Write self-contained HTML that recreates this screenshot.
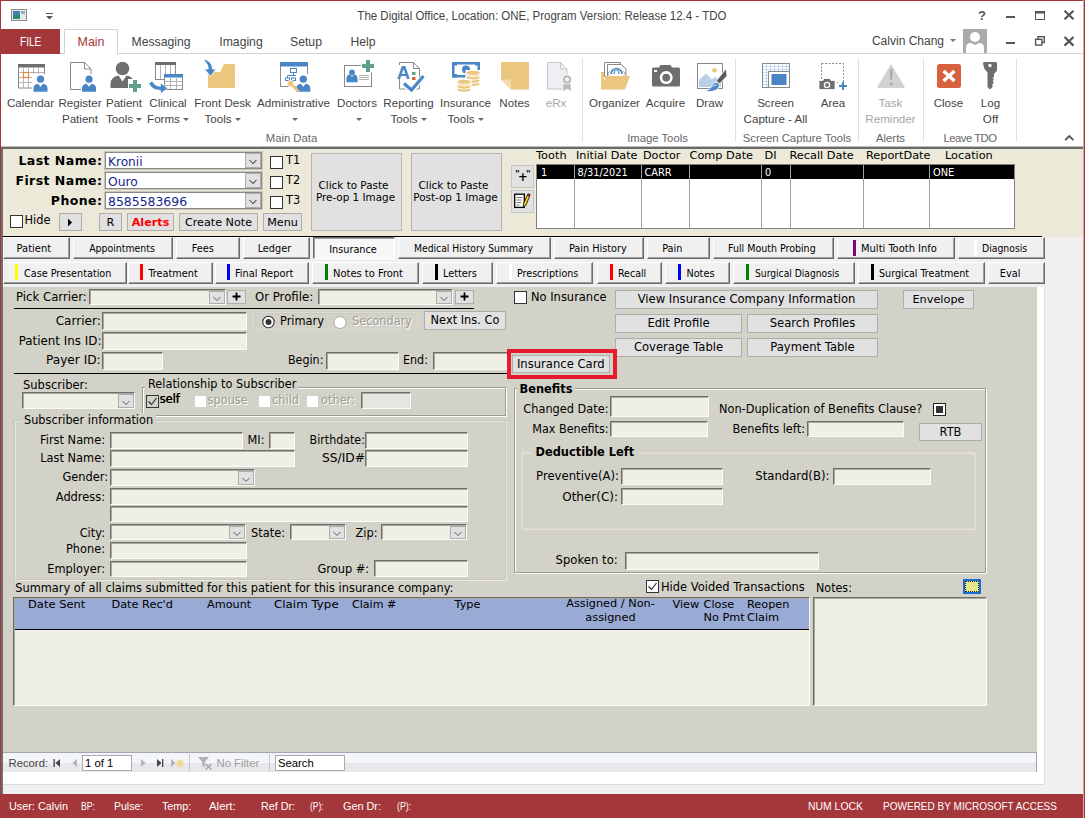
<!DOCTYPE html><html><head><meta charset="utf-8"><title>The Digital Office</title><style>
*{box-sizing:border-box;margin:0;padding:0}
html,body{width:1085px;height:818px;overflow:hidden;background:#fff}
body{position:relative;font-family:"Liberation Sans",sans-serif;font-size:12px;color:#444}
.a{position:absolute;white-space:nowrap}
.v{font-family:"DejaVu Sans","Liberation Sans",sans-serif;font-size:11.4px;color:#000;line-height:14px}
.t{font-family:"DejaVu Sans Condensed","DejaVu Sans","Liberation Sans",sans-serif;font-size:10.4px;color:#000}
.r{text-align:right}
.c{text-align:center}
.b{font-weight:bold}
.f{background:#f0efe6;border:1px solid;border-color:#7a7a74 #fff #fff #7a7a74;box-shadow:inset 1px 1px 0 #b9b6aa}
.btn{background:#e4e4e4;border:1px solid #adadad;text-align:center}
.tab{background:#f0f0f0;border:1px solid;border-color:#fff #696969 #696969 #fff;box-shadow:inset -1px -1px 0 #a0a0a0;text-align:center;line-height:18px}
.rl{font-size:11.6px;line-height:15px;color:#444;text-align:center}
.gl{font-size:11.3px;color:#666;text-align:center}
.cb{background:#fff;border:1px solid #333;width:13px;height:13px}
.sep{background:#e1e1e1;width:1px}
</style></head><body>
<div class="a  c" style="left:291.5px;width:500px;top:8px;font-size:12px;color:#444;line-height:16px"><span style="transform:scaleX(0.9566);transform-origin:center center;display:inline-block">The Digital Office, Location: ONE, Program Version: Release 12.4 - TDO</span></div>
<div class="a " style="left:1px;top:29px;width:59px;height:25px;background:#a4373a;color:#fff;text-align:center;line-height:27px;font-size:12px"><span style="display:inline-block;transform:scaleX(0.84)">FILE</span></div>
<div class="a " style="left:60px;top:53px;width:1025px;height:1px;background:#d4d4d4"></div>
<div class="a " style="left:64px;top:29px;width:54px;height:25px;background:#fff;border:1px solid #d4d4d4;border-bottom:none;color:#a4373a;text-align:center;line-height:25px;font-size:12.4px">Main</div>
<div class="a  c" style="left:111.0px;width:100px;top:29px;font-size:12.2px;line-height:27px;color:#444">Messaging</div>
<div class="a  c" style="left:191.0px;width:100px;top:29px;font-size:12.2px;line-height:27px;color:#444">Imaging</div>
<div class="a  c" style="left:256.0px;width:100px;top:29px;font-size:12.2px;line-height:27px;color:#444">Setup</div>
<div class="a  c" style="left:313.0px;width:100px;top:29px;font-size:12.2px;line-height:27px;color:#444">Help</div>
<div class="a " style="left:0px;top:146px;width:1085px;height:1px;background:#c0c0c0"></div>
<div class="a " style="left:0px;top:147px;width:1085px;height:2px;background:#6a6a6a"></div>
<div class="a " style="left:3px;top:149px;width:1080px;height:88px;background:#ece9d8"></div>
<div class="a " style="left:3px;top:237px;width:1080px;height:50px;background:#f0f0f0"></div>
<div class="a " style="left:3px;top:287px;width:1034px;height:466px;background:#d3d2c8"></div>
<div class="a " style="left:1037px;top:287px;width:8px;height:498px;background:#fff;border-right:1px solid #e0e0e0"></div>
<div class="a " style="left:1045px;top:287px;width:38px;height:500px;background:#f0f0f0"></div>
<div class="a " style="left:3px;top:752px;width:1034px;height:20px;background:linear-gradient(#f4f5f8 0,#f4f5f8 10px,#e6e8ec 10px);border-top:1px solid #a2a5b2;border-right:1px solid #a2a5b2"></div>
<div class="a " style="left:3px;top:772px;width:1041px;height:13px;background:#fff;border-bottom:1px solid #dcdcdc"></div>
<div class="a " style="left:3px;top:785px;width:1080px;height:9px;background:#f0f0f0"></div>
<div class="a " style="left:0px;top:794px;width:1085px;height:24px;background:#a4373a"></div>
<div class="a " style="left:0px;top:0px;width:1085px;height:1px;background:#a4373a"></div>
<div class="a " style="left:0px;top:0px;width:1px;height:818px;background:#a4373a"></div>
<div class="a " style="left:1083px;top:0px;width:1px;height:818px;background:#d9a5a6"></div>
<div class="a " style="left:1084px;top:0px;width:1px;height:818px;background:#a4373a"></div>
<div class="a " style="left:1px;top:147px;width:2px;height:647px;background:#6e7070"></div>
<div class="a rl c" style="left:-29.5px;width:120px;top:95px;color:#444">Calendar</div>
<div class="a rl c" style="left:20.0px;width:120px;top:95px;color:#444">Register</div>
<div class="a rl c" style="left:20.0px;width:120px;top:111px;color:#444">Patient</div>
<div class="a rl c" style="left:64.0px;width:120px;top:95px;color:#444">Patient</div>
<div class="a rl c" style="left:64.0px;width:120px;top:111px;color:#444">Tools<span style="display:inline-block;width:0;height:0;border-left:3px solid transparent;border-right:3px solid transparent;border-top:3.500px solid #666;margin-left:3px;vertical-align:middle;position:relative;top:0px"></span></div>
<div class="a rl c" style="left:108.0px;width:120px;top:95px;color:#444">Clinical</div>
<div class="a rl c" style="left:108.0px;width:120px;top:111px;color:#444">Forms<span style="display:inline-block;width:0;height:0;border-left:3px solid transparent;border-right:3px solid transparent;border-top:3.500px solid #666;margin-left:3px;vertical-align:middle;position:relative;top:0px"></span></div>
<div class="a rl c" style="left:162.5px;width:120px;top:95px;color:#444">Front Desk</div>
<div class="a rl c" style="left:162.5px;width:120px;top:111px;color:#444">Tools<span style="display:inline-block;width:0;height:0;border-left:3px solid transparent;border-right:3px solid transparent;border-top:3.500px solid #666;margin-left:3px;vertical-align:middle;position:relative;top:0px"></span></div>
<div class="a rl c" style="left:233.5px;width:120px;top:95px;color:#444">Administrative</div>
<div class="a rl c" style="left:233.5px;width:120px;top:111px;color:#444"><span style="display:inline-block;width:0;height:0;border-left:3px solid transparent;border-right:3px solid transparent;border-top:3.500px solid #666;margin-left:3px;vertical-align:middle;position:relative;top:0px"></span></div>
<div class="a rl c" style="left:297.0px;width:120px;top:95px;color:#444">Doctors</div>
<div class="a rl c" style="left:297.0px;width:120px;top:111px;color:#444"><span style="display:inline-block;width:0;height:0;border-left:3px solid transparent;border-right:3px solid transparent;border-top:3.500px solid #666;margin-left:3px;vertical-align:middle;position:relative;top:0px"></span></div>
<div class="a rl c" style="left:348.5px;width:120px;top:95px;color:#444">Reporting</div>
<div class="a rl c" style="left:348.5px;width:120px;top:111px;color:#444">Tools<span style="display:inline-block;width:0;height:0;border-left:3px solid transparent;border-right:3px solid transparent;border-top:3.500px solid #666;margin-left:3px;vertical-align:middle;position:relative;top:0px"></span></div>
<div class="a rl c" style="left:405.5px;width:120px;top:95px;color:#444">Insurance</div>
<div class="a rl c" style="left:405.5px;width:120px;top:111px;color:#444">Tools<span style="display:inline-block;width:0;height:0;border-left:3px solid transparent;border-right:3px solid transparent;border-top:3.500px solid #666;margin-left:3px;vertical-align:middle;position:relative;top:0px"></span></div>
<div class="a rl c" style="left:454.5px;width:120px;top:95px;color:#444">Notes</div>
<div class="a rl c" style="left:496.0px;width:120px;top:95px;color:#a6a6a6">eRx</div>
<div class="a rl c" style="left:554.5px;width:120px;top:95px;color:#444">Organizer</div>
<div class="a rl c" style="left:605.5px;width:120px;top:95px;color:#444">Acquire</div>
<div class="a rl c" style="left:649.5px;width:120px;top:95px;color:#444">Draw</div>
<div class="a rl c" style="left:715.5px;width:120px;top:95px;color:#444">Screen</div>
<div class="a rl c" style="left:715.5px;width:120px;top:111px;color:#444">Capture - All</div>
<div class="a rl c" style="left:773.0px;width:120px;top:95px;color:#444">Area</div>
<div class="a rl c" style="left:830.5px;width:120px;top:95px;color:#a6a6a6">Task</div>
<div class="a rl c" style="left:830.5px;width:120px;top:111px;color:#a6a6a6">Reminder</div>
<div class="a rl c" style="left:888.5px;width:120px;top:95px;color:#444">Close</div>
<div class="a rl c" style="left:930.5px;width:120px;top:95px;color:#444">Log</div>
<div class="a rl c" style="left:930.5px;width:120px;top:111px;color:#444">Off</div>
<div class="a gl c" style="left:211.5px;width:160px;top:131px;line-height:14px;letter-spacing:0">Main Data</div>
<div class="a gl c" style="left:577.5px;width:160px;top:131px;line-height:14px;letter-spacing:0">Image Tools</div>
<div class="a gl c" style="left:717.0px;width:160px;top:131px;line-height:14px;letter-spacing:0">Screen Capture Tools</div>
<div class="a gl c" style="left:810.5px;width:160px;top:131px;line-height:14px;letter-spacing:0">Alerts</div>
<div class="a gl c" style="left:890.0px;width:160px;top:131px;line-height:14px;letter-spacing:-0.5px">Leave TDO</div>
<div class="a sep" style="left:582px;top:58px;width:1px;height:84px;"></div>
<div class="a sep" style="left:735px;top:58px;width:1px;height:84px;"></div>
<div class="a sep" style="left:858px;top:58px;width:1px;height:84px;"></div>
<div class="a sep" style="left:923px;top:58px;width:1px;height:84px;"></div>
<div class="a sep" style="left:1016px;top:58px;width:1px;height:84px;"></div>
<div class="a  r" style="right:141px;top:33px;font-size:12px;line-height:16px;color:#444">Calvin Chang</div>
<div class="a " style="left:950px;top:39px;width:0px;height:0px;border-left:3px solid transparent;border-right:3px solid transparent;border-top:3.500px solid #777"></div>
<svg class="a" style="left:0;top:0" width="1085" height="148" viewBox="0 0 1085 148"><rect x="11.5" y="9.5" width="15" height="11" fill="#e8e8e8" stroke="#8a8a8a"/><rect x="13" y="11" width="7" height="8" fill="#2e8b6a"/><rect x="13" y="11" width="7" height="4" fill="#3f7fb5"/><rect x="21" y="11" width="4" height="3" fill="#9ab"/><rect x="46" y="13" width="7" height="1" fill="#555"/><path d="M46,16 h7 l-3.5,3.5 z" fill="#555"/><text x="982" y="20" font-family="Liberation Sans,sans-serif" font-weight="bold" font-size="13" text-anchor="middle" fill="#555">?</text><rect x="1006" y="16" width="9" height="2" fill="#555"/><rect x="1006" y="42" width="9" height="2" fill="#555"/><rect x="1035.5" y="11.5" width="9" height="8" fill="none" stroke="#555"/><rect x="1035" y="11" width="10" height="2.5" fill="#555"/><path d="M1064.5,10.7 l9,8.6 M1073.5,10.7 l-9,8.6" stroke="#555" stroke-width="2.200" fill="none"/><path d="M1064.5,37.0 l9,8.6 M1073.5,37.0 l-9,8.6" stroke="#555" stroke-width="2.200" fill="none"/><rect x="1038" y="36.700" width="6.300" height="5.800" fill="none" stroke="#555" stroke-width="1.400"/><rect x="1035.600" y="39.300" width="6.300" height="5.800" fill="#fff" stroke="#555" stroke-width="1.400"/><rect x="963" y="29" width="24" height="24" fill="#ababab"/><circle cx="975" cy="37" r="5" fill="#fff"/><path d="M966,53 v-5 q0,-5 5,-5 l4,2 l4,-2 q5,0 5,5 v5 z" fill="#fff"/><path d="M1065.200,140.200 l4.100,-4.100 l4.100,4.100" stroke="#555" stroke-width="1.900" fill="none"/><rect x="18.5" y="64.500" width="26" height="23.5" fill="#fff" stroke="#8a8a8a"/><rect x="18" y="64" width="27" height="3.5" fill="#6e6e6e"/><path d="M23.5,68 v20" stroke="#b4b4b4"/><path d="M28.5,68 v20" stroke="#b4b4b4"/><path d="M33.5,68 v20" stroke="#b4b4b4"/><path d="M38.5,68 v20" stroke="#b4b4b4"/><path d="M19,72.5 h25" stroke="#b4b4b4"/><path d="M19,77.5 h25" stroke="#b4b4b4"/><path d="M19,82.5 h25" stroke="#b4b4b4"/><rect x="23.5" y="72.5" width="5" height="5" fill="#fff" stroke="#e08a3c" stroke-width="1.2"/><rect x="32" y="74" width="16" height="18" fill="#fff"/><circle cx="40.5" cy="79.2" r="3.6" fill="#4a86c5"/><path d="M33.5,91.7 v-3.5 q0,-4 4.5,-4.5 l2.5,3.0 l2.5,-3.0 q4.5,0.5 4.5,4.5 v3.5 z" fill="#4a86c5"/><path d="M70.500,62.500 h14 l6.500,6.500 v20.500 h-20.500 z" fill="#fff" stroke="#8a8a8a"/><path d="M84.500,62.500 v6.500 h6.500" fill="none" stroke="#8a8a8a"/><rect x="81" y="74" width="16" height="18" fill="#fff"/><circle cx="89" cy="79.2" r="3.6" fill="#4a86c5"/><path d="M82.0,91.7 v-3.5 q0,-4 4.5,-4.5 l2.5,3.0 l2.5,-3.0 q4.5,0.5 4.5,4.5 v3.5 z" fill="#4a86c5"/><circle cx="122.500" cy="68.500" r="6.800" fill="#6e6e6e"/><path d="M110.500,88 v-4 q0,-7 8,-8.500 l4,6 l4,-6 q8,1.500 8,8.500 v4 z" fill="#6e6e6e"/><rect x="128" y="79" width="13" height="13" fill="#fff"/><path d="M133,80 h4 v4 h4 v4 h-4 v4 h-4 v-4 h-4 v-4 h4 z" fill="#5fa08a"/><rect x="155.500" y="62.500" width="20" height="17" fill="#fff" stroke="#8a8a8a"/><rect x="155" y="62" width="21" height="3" fill="#6e6e6e"/><path d="M160.5,65 v14" stroke="#b4b4b4"/><path d="M165.5,65 v14" stroke="#b4b4b4"/><path d="M170.5,65 v14" stroke="#b4b4b4"/><rect x="164.500" y="74.500" width="18" height="15" fill="#fff" stroke="#8a8a8a"/><rect x="164" y="74" width="19" height="3.500" fill="#4a86c5"/><path d="M170.5,78 v11" stroke="#b4b4b4"/><path d="M176.5,78 v11" stroke="#b4b4b4"/><path d="M165,81.5 h17" stroke="#b4b4b4"/><path d="M165,85.5 h17" stroke="#b4b4b4"/><path d="M152.300,81 q2.200,5.300 8.200,5.300 v-3.300 l7.400,5.300 l-7.400,5.300 v-3.300 q-8.500,0 -11.700,-6.800 z" fill="#4a86c5" stroke="#fff" stroke-width="0.6"/><path d="M208,88 v-16 h12 l4,-8 h10 q1,0 1,1 v23 z" fill="#eac67e"/><path d="M205.500,59.500 q7,3 7,9.500 h3.500 l-5.500,7.500 l-6,-7.500 h3.800 q0,-5 -4.300,-8.500 z" fill="#4a86c5" stroke="#fff" stroke-width="0.8"/><rect x="280.500" y="62.500" width="27" height="24" fill="#fff" stroke="#8a8a8a"/><rect x="280" y="62" width="28" height="4.500" fill="#4a86c5"/><rect x="290.500" y="68.500" width="6" height="4" fill="#fff" stroke="#4a86c5"/><path d="M293.500,72.500 v3 M287.500,78 v-2.500 h12 v2.500" fill="none" stroke="#4a86c5"/><rect x="285.500" y="78" width="4" height="2.500" fill="#fff" stroke="#4a86c5"/><rect x="291.500" y="78" width="4" height="2.500" fill="#fff" stroke="#4a86c5"/><rect x="296" y="74" width="16" height="18" fill="#fff"/><circle cx="303.3" cy="79.2" r="3.6" fill="#4a86c5"/><path d="M296.3,91.7 v-3.5 q0,-4 4.5,-4.5 l2.5,3.0 l2.5,-3.0 q4.5,0.5 4.5,4.5 v3.5 z" fill="#4a86c5"/><circle cx="290.500" cy="83.500" r="3.300" fill="#eac67e" stroke="#fff" stroke-width="0.8"/><path d="M292.500,85.500 l6,6" stroke="#eac67e" stroke-width="2.600"/><path d="M295,89.500 l1.500,-1.500 M297,91.500 l1.500,-1.500" stroke="#eac67e" stroke-width="1.300"/><rect x="344.500" y="65.500" width="27" height="21" fill="#fff" stroke="#8a8a8a"/><circle cx="352" cy="72.3" r="2.8800000000000003" fill="#4a86c5"/><path d="M346.4,82.3 v-3.5 q0,-4 3.6,-4.5 l2.0,2.4000000000000004 l2.0,-2.4000000000000004 q3.6,0.5 3.6,4.5 v3.5 z" fill="#4a86c5"/><path d="M359,75.5 h10" stroke="#b4b4b4"/><path d="M359,77.5 h10" stroke="#b4b4b4"/><path d="M359,79.5 h10" stroke="#b4b4b4"/><rect x="361" y="59" width="14" height="13.500" fill="#fff"/><path d="M366,60 h4 v4 h4 v4 h-4 v4 h-4 v-4 h-4 v-4 h4 z" fill="#5fa08a"/><path d="M399.500,62.500 h14 l6,6 v20.500 h-20 z" fill="#fff" stroke="#8a8a8a"/><path d="M413.500,62.500 v6 h6" fill="none" stroke="#8a8a8a"/><rect x="395" y="65" width="16" height="14" fill="#fff"/><text x="403.500" y="78.500" font-family="Liberation Sans,sans-serif" font-size="18.500" font-weight="bold" text-anchor="middle" fill="#4a86c5">A</text><rect x="412" y="72" width="3.500" height="3" fill="#5fa08a"/><rect x="412" y="77" width="3.500" height="3" fill="#d9603f"/><path d="M403.500,83.500 l8,7 l12.500,-14.500" fill="none" stroke="#fff" stroke-width="5.500"/><path d="M404,83.500 l7.500,6.500 l12,-14" fill="none" stroke="#4a86c5" stroke-width="3.200"/><rect x="452" y="62" width="28" height="15.500" fill="#4a86c5"/><rect x="454.500" y="64.500" width="23" height="10.500" fill="#fff"/><circle cx="466" cy="69.500" r="4" fill="#4a86c5"/><rect x="452" y="62" width="5" height="3.500" fill="#4a86c5"/><rect x="475" y="62" width="5" height="3.500" fill="#4a86c5"/><rect x="452" y="74" width="5" height="3.500" fill="#4a86c5"/><rect x="465.5" y="70.0" width="15" height="16.8" fill="#fff"/><ellipse cx="473" cy="83.9" rx="7.100" ry="2.500" fill="#eac67e" stroke="#fff" stroke-width="0.9"/><ellipse cx="473" cy="80.7" rx="7.100" ry="2.500" fill="#eac67e" stroke="#fff" stroke-width="0.9"/><ellipse cx="473" cy="77.5" rx="7.100" ry="2.500" fill="#eac67e" stroke="#fff" stroke-width="0.9"/><ellipse cx="473" cy="74.3" rx="7.100" ry="2.500" fill="#eac67e" stroke="#fff" stroke-width="0.9"/><ellipse cx="473" cy="72.8" rx="7.100" ry="2.500" fill="#eac67e" stroke="#fff" stroke-width="0.9"/><rect x="456.5" y="79.0" width="15" height="13.600000000000001" fill="#fff"/><ellipse cx="464" cy="89.7" rx="7.100" ry="2.500" fill="#eac67e" stroke="#fff" stroke-width="0.9"/><ellipse cx="464" cy="86.5" rx="7.100" ry="2.500" fill="#eac67e" stroke="#fff" stroke-width="0.9"/><ellipse cx="464" cy="83.3" rx="7.100" ry="2.500" fill="#eac67e" stroke="#fff" stroke-width="0.9"/><ellipse cx="464" cy="81.8" rx="7.100" ry="2.500" fill="#eac67e" stroke="#fff" stroke-width="0.9"/><path d="M501,62 h28 v27.500 h-18 l-10,-10 z" fill="#eac67e"/><path d="M501,79.500 h10 v10 z" fill="#f3dcae"/><path d="M547.500,62.500 h13 l6.500,6.500 v20 h-19.500 z" fill="#f1eef3" stroke="#c8c4cc"/><path d="M560.500,62.500 v6.500 h6.500" fill="none" stroke="#c8c4cc"/><path d="M563.300,83 l-0.500,8.500 l4.200,-2.500 l4.200,2.500 l-0.500,-8.500 z" fill="#b9b6bc" stroke="#fff" stroke-width="0.6"/><circle cx="567" cy="79.500" r="4.600" fill="#b9b6bc" stroke="#fff" stroke-width="0.8"/><circle cx="567" cy="79.500" r="2.200" fill="#f1eef3"/><path d="M604.500,62.500 h16 v14 h-16 z" fill="#fff" stroke="#8a8a8a"/><path d="M607.500,64.500 h14 l4.500,4.500 v10 h-18.500 z" fill="#fff" stroke="#8a8a8a"/><path d="M611,74 a5.500,5.500 0 0 1 11,0" fill="none" stroke="#4a86c5" stroke-width="1.600"/><path d="M614,74 a2.500,4 0 0 1 5,0" fill="none" stroke="#4a86c5" stroke-width="1.200"/><path d="M609.500,71.500 l-2,2 l2,2 M623.500,71.500 l2,2 l-2,2" fill="none" stroke="#8a8a8a" stroke-width="0.9"/><path d="M601,72 h3 v17 h-3 z" fill="#eac67e"/><path d="M601,89.500 l5,-13.500 h24 l-5,13.500 z" fill="#eac67e"/><path d="M652,69 q0,-1.500 1.500,-1.500 h5.500 l1.500,-2.500 h10 l1.500,2.500 h6.500 q1.500,0 1.500,1.500 v16 q0,1.500 -1.500,1.500 h-25 q-1.500,0 -1.500,-1.500 z" fill="#6e6e6e"/><circle cx="666.200" cy="77.600" r="5.200" fill="none" stroke="#fff" stroke-width="2.600"/><rect x="654" y="70" width="3" height="2" fill="#fff"/><rect x="697.500" y="63.500" width="25" height="25" fill="#fff" stroke="#8a8a8a"/><circle cx="714.500" cy="70.300" r="2.300" fill="#eac67e"/><path d="M699,87 v-7 l7,-6.500 l6,6 l3,-2.500 l6,5.500 v4.500 z" fill="#b9cfe8"/><path d="M726.300,68.500 l0.700,7.500 l-7.500,8 l-3.200,-3.200 z" fill="#5a5a5a" stroke="#fff" stroke-width="0.8"/><path d="M704,91 q6,-0.500 8,-5.500 q2.500,-4.500 6.300,-2.500 q2.700,2.500 -0.500,5.800 q-4.500,4 -13.800,2.200 z" fill="#4a86c5" stroke="#fff" stroke-width="0.8"/><path d="M712.500,87 q1.500,-2.500 4,-2" stroke="#fff" fill="none" stroke-width="0.9"/><rect x="762.500" y="63.500" width="27" height="24" fill="#fff" stroke="#8a8a8a"/><path d="M766.5,64 v23" stroke="#c5d9f1"/><path d="M770.5,64 v23" stroke="#c5d9f1"/><path d="M774.5,64 v23" stroke="#c5d9f1"/><path d="M778.5,64 v23" stroke="#c5d9f1"/><path d="M782.5,64 v23" stroke="#c5d9f1"/><path d="M786.5,64 v23" stroke="#c5d9f1"/><path d="M763,66.5 h26" stroke="#c5d9f1"/><path d="M763,69.5 h26" stroke="#c5d9f1"/><path d="M763,72.5 h26" stroke="#c5d9f1"/><path d="M763,75.5 h26" stroke="#c5d9f1"/><path d="M763,78.5 h26" stroke="#c5d9f1"/><path d="M763,81.5 h26" stroke="#c5d9f1"/><path d="M763,84.5 h26" stroke="#c5d9f1"/><rect x="768.500" y="71.500" width="21" height="16" fill="#fff" stroke="#8a8a8a"/><rect x="771.500" y="74" width="15" height="11" fill="#4a86c5"/><rect x="821.500" y="63.500" width="22" height="19" fill="none" stroke="#8a8a8a" stroke-dasharray="2,1.500"/><path d="M819,81.500 q0,-1 1,-1 h3 l1,-2 h6 l1,2 h3 q1,0 1,1 v7 q0,1 -1,1 h-14 q-1,0 -1,-1 z" fill="#6e6e6e" stroke="#fff" stroke-width="0.8"/><circle cx="827" cy="85" r="2.600" fill="none" stroke="#fff" stroke-width="1.400"/><rect x="838" y="82" width="10" height="8" fill="#fff"/><path d="M839,86 h8 M843,82 v8" stroke="#4a86c5" stroke-width="2"/><path d="M891,64 l-13.500,22.500 q-0.500,1.500 1,1.500 h25 q1.500,0 1,-1.500 z" fill="#d4d1d5"/><path d="M890,69 h2.500 l-0.500,11 h-1.500 z" fill="#a9a6ab"/><circle cx="891.200" cy="83.800" r="1.500" fill="#a9a6ab"/><rect x="937" y="64" width="24" height="24" rx="2.500" fill="#d9603f"/><path d="M943.500,71 l11,10 M954.500,71 l-11,10" stroke="#fff" stroke-width="3.400"/><path d="M983,63.500 q0,-1.500 1.500,-1.500 h11 q1.500,0 1.500,1.500 v7 l-3,3.500 v3 l-1.500,1 l1.500,1.500 l-1.500,1.500 l1.500,1.500 l-1.500,1.500 v3 l-2.500,2.500 l-2.500,-2.500 v-14.500 l-3,-3.500 z" fill="#6e6e6e"/><circle cx="990" cy="65.500" r="1.700" fill="#fff"/></svg>
<div class="a v b r" style="right:982.5px;top:153px;font-size:12.5px;letter-spacing:0.45px;line-height:16px">Last Name:</div>
<div class="a v b r" style="right:982.5px;top:173px;font-size:12.5px;letter-spacing:0.45px;line-height:16px">First Name:</div>
<div class="a v b r" style="right:982.5px;top:193px;font-size:12.5px;letter-spacing:0.45px;line-height:16px">Phone:</div>
<div class="a " style="left:105px;top:152px;width:157px;height:17px;background:#fff;border:1px solid #8a8a8a;box-shadow:0 0 0 1px #c9c7ba"></div>
<div class="a v" style="transform:scaleX(1.0023);transform-origin:left center;left:107.5px;top:153px;font-size:12.1px;color:#16268a;line-height:18px">Kronii</div>
<div class="a" style="left:245px;top:153px;width:16px;height:15px;background:#e1e1e1;border:1px solid #adadad"></div>
<svg class="a" style="left:248.0px;top:157.7px" width="10" height="8" viewBox="0 0 10 8"><path d="M1.500,2 l3.500,3.500 l3.500,-3.500" fill="none" stroke="#444" stroke-width="1.050"/></svg>
<div class="a " style="left:105px;top:172px;width:157px;height:17px;background:#fff;border:1px solid #8a8a8a;box-shadow:0 0 0 1px #c9c7ba"></div>
<div class="a v" style="transform:scaleX(1.0206);transform-origin:left center;left:107.5px;top:173px;font-size:12.1px;color:#16268a;line-height:18px">Ouro</div>
<div class="a" style="left:245px;top:173px;width:16px;height:15px;background:#e1e1e1;border:1px solid #adadad"></div>
<svg class="a" style="left:248.0px;top:177.7px" width="10" height="8" viewBox="0 0 10 8"><path d="M1.500,2 l3.500,3.500 l3.500,-3.500" fill="none" stroke="#444" stroke-width="1.050"/></svg>
<div class="a " style="left:105px;top:192px;width:157px;height:17px;background:#fff;border:1px solid #8a8a8a;box-shadow:0 0 0 1px #c9c7ba"></div>
<div class="a v" style="transform:scaleX(1.0279);transform-origin:left center;left:107.5px;top:193px;font-size:12.1px;color:#16268a;line-height:18px">8585583696</div>
<div class="a" style="left:245px;top:193px;width:16px;height:15px;background:#e1e1e1;border:1px solid #adadad"></div>
<svg class="a" style="left:248.0px;top:197.7px" width="10" height="8" viewBox="0 0 10 8"><path d="M1.500,2 l3.500,3.500 l3.500,-3.500" fill="none" stroke="#444" stroke-width="1.050"/></svg>
<div class="a " style="left:270px;top:156px;width:13px;height:13px;background:#fff;border:1px solid #333"></div>
<div class="a v" style="left:286px;top:153px;font-size:11.4px;line-height:14px">T1</div>
<div class="a " style="left:270px;top:176px;width:13px;height:13px;background:#fff;border:1px solid #333"></div>
<div class="a v" style="left:286px;top:173px;font-size:11.4px;line-height:14px">T2</div>
<div class="a " style="left:270px;top:196px;width:13px;height:13px;background:#fff;border:1px solid #333"></div>
<div class="a v" style="left:286px;top:193px;font-size:11.4px;line-height:14px">T3</div>
<div class="a " style="left:10px;top:215px;width:13px;height:13px;background:#fff;border:1px solid #333"></div>
<div class="a v" style="left:24.5px;top:213px;line-height:14px">Hide</div>
<div class="a btn v" style="left:59px;top:213px;width:23px;height:18px;background:#e1e1e1;border-color:#adadad;line-height:17px;font-size:11.2px;"></div>
<svg class="a" style="left:67px;top:218px" width="6" height="9" viewBox="0 0 6 9"><path d="M1,0.500 l4,4 l-4,4 z" fill="#000"/></svg>
<div class="a btn v" style="left:99px;top:213px;width:23px;height:18px;background:#e1e1e1;border-color:#adadad;line-height:17px;font-size:11.2px;">R</div>
<div class="a btn v b" style="left:127px;top:213px;width:47px;height:18px;background:#e1e1e1;border-color:#adadad;line-height:17px;font-size:11.2px;color:#f00;font-size:11.2px">Alerts</div>
<div class="a btn v" style="left:179px;top:213px;width:79px;height:18px;background:#e1e1e1;border-color:#adadad;line-height:17px;font-size:11.2px;">Create Note</div>
<div class="a btn v" style="left:263px;top:213px;width:39px;height:18px;background:#e1e1e1;border-color:#adadad;line-height:17px;font-size:11.2px;">Menu</div>
<div class="a " style="left:311px;top:153px;width:91px;height:78px;background:#e1e1e1;border:1px solid #b5b5b5"></div>
<div class="a v c" style="left:303.5px;width:100px;top:179px;font-size:10.4px;line-height:12px">Click to Paste</div>
<div class="a v c" style="left:305.5px;width:100px;top:191px;font-size:10.4px;line-height:12px">Pre-op 1 Image</div>
<div class="a " style="left:411px;top:153px;width:91px;height:78px;background:#e1e1e1;border:1px solid #b5b5b5"></div>
<div class="a v c" style="left:403.5px;width:100px;top:179px;font-size:10.4px;line-height:12px">Click to Paste</div>
<div class="a v c" style="left:405.5px;width:100px;top:191px;font-size:10.4px;line-height:12px">Post-op 1 Image</div>
<div class="a btn v b" style="left:511px;top:165px;width:23px;height:23px;background:#e1e1e1;border-color:#c4c4c4;line-height:22px;font-size:11.2px;font-size:11.5px;letter-spacing:-0.6px"><span style="font-size:9px;position:relative;top:-4px;left:1px">&quot;</span><span style="position:relative;top:0px">+</span><span style="font-size:9px;position:relative;top:-4px;left:-1px">&quot;</span></div>
<div class="a btn v" style="left:511px;top:190px;width:23px;height:23px;background:#e1e1e1;border-color:#c4c4c4;line-height:22px;font-size:11.2px;"></div>
<svg class="a" style="left:511px;top:190px" width="23" height="23" viewBox="511 190 23 23"><rect x="514.700" y="194.200" width="9.600" height="13.200" fill="#fff" stroke="#000" stroke-width="1.300"/><path d="M516.500,197.500 h6 M516.500,200 h5 M516.500,202.500 h4.500 M516.500,205 h3" stroke="#555" stroke-width="0.8"/><path d="M527.300,195.200 l2.300,1 l-3.800,9.300 l-2.300,1.200 l-0.200,-2.600 z" fill="#f2d21b" stroke="#000" stroke-width="0.8"/><path d="M527.300,195.200 l2.300,1 l0.700,-1.700 l-2.300,-1 z" fill="#d22" stroke="#000" stroke-width="0.5"/></svg>
<div class="a v" style="transform:scaleX(1.0064);transform-origin:left center;left:535.9px;top:149px;line-height:14px;font-size:11.3px">Tooth</div>
<div class="a v" style="transform:scaleX(0.9942);transform-origin:left center;left:576px;top:149px;line-height:14px;font-size:11.3px">Initial Date</div>
<div class="a v" style="transform:scaleX(0.9891);transform-origin:left center;left:643.4px;top:149px;line-height:14px;font-size:11.3px">Doctor</div>
<div class="a v" style="left:689.5px;top:149px;line-height:14px;font-size:11.3px">Comp Date</div>
<div class="a v" style="left:764.5px;top:149px;line-height:14px;font-size:11.3px">DI</div>
<div class="a v" style="left:789.5px;top:149px;line-height:14px;font-size:11.3px">Recall Date</div>
<div class="a v" style="left:866px;top:149px;line-height:14px;font-size:11.3px">ReportDate</div>
<div class="a v" style="left:945px;top:149px;line-height:14px;font-size:11.3px">Location</div>
<div class="a " style="left:536px;top:164px;width:479px;height:65px;background:#fff;border:1px solid #808080"></div>
<div class="a " style="left:537px;top:165px;width:477px;height:14px;background:#000"></div>
<div class="a " style="left:574px;top:165px;width:1px;height:63px;background:#a0a0a0"></div>
<div class="a " style="left:641px;top:165px;width:1px;height:63px;background:#a0a0a0"></div>
<div class="a " style="left:689px;top:165px;width:1px;height:63px;background:#a0a0a0"></div>
<div class="a " style="left:761px;top:165px;width:1px;height:63px;background:#a0a0a0"></div>
<div class="a " style="left:790px;top:165px;width:1px;height:63px;background:#a0a0a0"></div>
<div class="a " style="left:863px;top:165px;width:1px;height:63px;background:#a0a0a0"></div>
<div class="a " style="left:929px;top:165px;width:1px;height:63px;background:#a0a0a0"></div>
<div class="a t" style="left:541px;top:166px;color:#fff;line-height:14px;font-size:10.9px">1</div>
<div class="a t" style="left:577.5px;top:166px;color:#fff;line-height:14px;font-size:10.9px">8/31/2021</div>
<div class="a t" style="left:644.5px;top:166px;color:#fff;line-height:14px;font-size:10.9px">CARR</div>
<div class="a t" style="left:765px;top:166px;color:#fff;line-height:14px;font-size:10.9px">0</div>
<div class="a t" style="left:933px;top:166px;color:#fff;line-height:14px;font-size:10.9px">ONE</div>
<div class="a " style="left:3px;top:236px;width:1039px;height:1px;background:#000"></div>
<div class="a tab" style="left:3px;top:237px;width:67px;height:22px;"></div>
<div class="a t c" style="left:-65.7px;width:200px;top:241.7px;font-size:10.8px;line-height:14px"><span style="transform:scaleX(1.0242);transform-origin:center center;display:inline-block">Patient</span></div>
<div class="a tab" style="left:73px;top:237px;width:100px;height:22px;"></div>
<div class="a t c" style="left:21.700000000000003px;width:200px;top:241.7px;font-size:10.8px;line-height:14px"><span style="transform:scaleX(0.9653);transform-origin:center center;display:inline-block">Appointments</span></div>
<div class="a tab" style="left:176px;top:237px;width:64px;height:22px;"></div>
<div class="a t c" style="left:102.80000000000001px;width:200px;top:241.7px;font-size:10.8px;line-height:14px">Fees</div>
<div class="a tab" style="left:243px;top:237px;width:67px;height:22px;"></div>
<div class="a t c" style="left:174.39999999999998px;width:200px;top:241.7px;font-size:10.8px;line-height:14px">Ledger</div>
<div class="a " style="left:313px;top:237px;width:82px;height:22px;background:#f7f7f7;border:1px solid;border-color:#696969 #fff #fff #696969;box-shadow:inset 1px 1px 0 #a0a0a0"></div>
<div class="a t c" style="left:273.0px;width:160px;top:242.7px;font-size:10.8px;line-height:14px">Insurance</div>
<div class="a tab" style="left:398px;top:237px;width:153px;height:22px;"></div>
<div class="a t c" style="left:373.0px;width:200px;top:241.7px;font-size:10.8px;line-height:14px"><span style="transform:scaleX(0.9520);transform-origin:center center;display:inline-block">Medical History Summary</span></div>
<div class="a tab" style="left:554px;top:237px;width:90px;height:22px;"></div>
<div class="a t c" style="left:497.9px;width:200px;top:241.7px;font-size:10.8px;line-height:14px">Pain History</div>
<div class="a tab" style="left:647px;top:237px;width:63px;height:22px;"></div>
<div class="a t c" style="left:572.3px;width:200px;top:241.7px;font-size:10.8px;line-height:14px">Pain</div>
<div class="a tab" style="left:713px;top:237px;width:121px;height:22px;"></div>
<div class="a t c" style="left:672.3px;width:200px;top:241.7px;font-size:10.8px;line-height:14px"><span style="transform:scaleX(0.9762);transform-origin:center center;display:inline-block">Full Mouth Probing</span></div>
<div class="a tab" style="left:837px;top:237px;width:118px;height:22px;"></div>
<div class="a t" style="transform:scaleX(1.0224);transform-origin:left center;left:861.3px;top:241.7px;font-size:10.8px;line-height:14px">Multi Tooth Info</div>
<div class="a " style="left:853px;top:240px;width:3px;height:16px;background:#800080"></div>
<div class="a tab" style="left:958px;top:237px;width:87px;height:22px;"></div>
<div class="a t" style="transform:scaleX(0.9569);transform-origin:left center;left:982px;top:241.7px;font-size:10.8px;line-height:14px">Diagnosis</div>
<div class="a " style="left:974px;top:240px;width:3px;height:16px;background:#fff"></div>
<div class="a tab" style="left:3px;top:262px;width:124px;height:22px;"></div>
<div class="a t" style="transform:scaleX(0.9951);transform-origin:left center;left:23.6px;top:267.0px;font-size:10.8px;line-height:14px">Case Presentation</div>
<div class="a " style="left:15px;top:264px;width:3px;height:16px;background:#ffff00"></div>
<div class="a tab" style="left:128px;top:262px;width:85px;height:22px;"></div>
<div class="a t" style="left:148.5px;top:267.0px;font-size:10.8px;line-height:14px">Treatment</div>
<div class="a " style="left:140px;top:264px;width:3px;height:16px;background:#ff0000"></div>
<div class="a tab" style="left:215px;top:262px;width:94px;height:22px;"></div>
<div class="a t" style="transform:scaleX(1.0131);transform-origin:left center;left:235.2px;top:267.0px;font-size:10.8px;line-height:14px">Final Report</div>
<div class="a " style="left:227px;top:264px;width:3px;height:16px;background:#0000ff"></div>
<div class="a tab" style="left:312px;top:262px;width:107px;height:22px;"></div>
<div class="a t" style="transform:scaleX(1.0228);transform-origin:left center;left:333.3px;top:267.0px;font-size:10.8px;line-height:14px">Notes to Front</div>
<div class="a " style="left:325px;top:264px;width:3px;height:16px;background:#008000"></div>
<div class="a tab" style="left:422px;top:262px;width:71px;height:22px;"></div>
<div class="a t" style="left:443px;top:267.0px;font-size:10.8px;line-height:14px">Letters</div>
<div class="a " style="left:435px;top:264px;width:3px;height:16px;background:#000"></div>
<div class="a tab" style="left:496px;top:262px;width:97px;height:22px;"></div>
<div class="a t" style="transform:scaleX(0.9835);transform-origin:left center;left:517.2px;top:267.0px;font-size:10.8px;line-height:14px">Prescriptions</div>
<div class="a " style="left:509px;top:264px;width:3px;height:16px;background:#fff"></div>
<div class="a tab" style="left:597px;top:262px;width:65px;height:22px;"></div>
<div class="a t" style="transform:scaleX(0.9745);transform-origin:left center;left:618.4px;top:267.0px;font-size:10.8px;line-height:14px">Recall</div>
<div class="a " style="left:610px;top:264px;width:3px;height:16px;background:#ff0000"></div>
<div class="a tab" style="left:665px;top:262px;width:65px;height:22px;"></div>
<div class="a t" style="left:686.4px;top:267.0px;font-size:10.8px;line-height:14px">Notes</div>
<div class="a " style="left:678px;top:264px;width:3px;height:16px;background:#0000ff"></div>
<div class="a tab" style="left:733px;top:262px;width:122px;height:22px;"></div>
<div class="a t" style="transform:scaleX(0.9440);transform-origin:left center;left:754.7px;top:267.0px;font-size:10.8px;line-height:14px">Surgical Diagnosis</div>
<div class="a " style="left:746px;top:264px;width:3px;height:16px;background:#008000"></div>
<div class="a tab" style="left:858px;top:262px;width:127px;height:22px;"></div>
<div class="a t" style="transform:scaleX(0.9867);transform-origin:left center;left:879.3px;top:267.0px;font-size:10.8px;line-height:14px">Surgical Treatment</div>
<div class="a " style="left:871px;top:264px;width:3px;height:16px;background:#000"></div>
<div class="a tab" style="left:988px;top:262px;width:57px;height:22px;"></div>
<div class="a t c" style="left:910.1px;width:200px;top:267.0px;font-size:10.8px;line-height:14px">Eval</div>
<div class="a v" style="transform:scaleX(1.0020);transform-origin:left center;left:15.5px;top:290.0px;line-height:14px;font-size:11.7px">Pick Carrier:</div>
<div class="a " style="left:89px;top:289px;width:137px;height:16px;background:#f0efe6;border:1px solid;border-color:#6d6d69 #fbfbf8 #fbfbf8 #6d6d69;box-shadow:inset 1px 1px 0 #a9a79e"></div>
<div class="a" style="left:209px;top:291px;width:16px;height:13px;background:#e1e1e1;border:1px solid #adadad"></div>
<svg class="a" style="left:212px;top:295.3px" width="10" height="8" viewBox="0 0 10 8"><path d="M1.500,2 l3.500,3.500 l3.500,-3.500" fill="none" stroke="#555" stroke-width="0.950"/></svg>
<div class="a btn" style="left:227px;top:290px;width:19px;height:14px;background:#e1e1e1;border-color:#adadad"></div>
<div class="a btn" style="left:455px;top:290px;width:19px;height:14px;background:#e1e1e1;border-color:#adadad"></div>
<svg class="a" style="left:231px;top:291px" width="11" height="11" viewBox="0 0 11 11"><path d="M5.500,1.500 v8 M1.500,5.500 h8" stroke="#000" stroke-width="1.800"/></svg>
<svg class="a" style="left:459px;top:291px" width="11" height="11" viewBox="0 0 11 11"><path d="M5.500,1.500 v8 M1.500,5.500 h8" stroke="#000" stroke-width="1.800"/></svg>
<div class="a v" style="transform:scaleX(1.0017);transform-origin:left center;left:255px;top:289.5px;line-height:14px;font-size:11.7px">Or Profile:</div>
<div class="a " style="left:318px;top:289px;width:135px;height:16px;background:#f0efe6;border:1px solid;border-color:#6d6d69 #fbfbf8 #fbfbf8 #6d6d69;box-shadow:inset 1px 1px 0 #a9a79e"></div>
<div class="a" style="left:436px;top:291px;width:16px;height:13px;background:#e1e1e1;border:1px solid #adadad"></div>
<svg class="a" style="left:439px;top:295.3px" width="10" height="8" viewBox="0 0 10 8"><path d="M1.500,2 l3.500,3.500 l3.500,-3.500" fill="none" stroke="#555" stroke-width="0.950"/></svg>
<div class="a " style="left:14px;top:308px;width:460px;height:1px;background:#000"></div>
<div class="a " style="left:514px;top:291px;width:13px;height:13px;background:#fff;border:1px solid #333"></div>
<div class="a v" style="transform:scaleX(1.0067);transform-origin:left center;left:530.5px;top:289.5px;line-height:14px;">No Insurance</div>
<div class="a btn v" style="left:615px;top:290px;width:263px;height:19px;background:#e1e1e1;border-color:#adadad;line-height:17px;font-size:11.6px">View Insurance Company Information</div>
<div class="a btn v" style="left:903px;top:290px;width:71px;height:19px;background:#e1e1e1;border-color:#adadad;line-height:17px;font-size:11.3px">Envelope</div>
<div class="a btn v" style="left:615px;top:314px;width:127px;height:19px;background:#e1e1e1;border-color:#adadad;line-height:17px;font-size:11.6px">Edit Profile</div>
<div class="a btn v" style="left:747px;top:314px;width:131px;height:19px;background:#e1e1e1;border-color:#adadad;line-height:17px;font-size:11.6px">Search Profiles</div>
<div class="a btn v" style="left:615px;top:338px;width:127px;height:19px;background:#e1e1e1;border-color:#adadad;line-height:17px;font-size:11.6px">Coverage Table</div>
<div class="a btn v" style="left:747px;top:338px;width:131px;height:19px;background:#e1e1e1;border-color:#adadad;line-height:17px;font-size:11.6px">Payment Table</div>
<div class="a v r" style="transform:scaleX(1.0297);transform-origin:right center;right:984px;top:314.0px;line-height:14px;font-size:11.7px">Carrier:</div>
<div class="a " style="left:102px;top:312px;width:145px;height:18px;background:#f0efe6;border:1px solid;border-color:#6d6d69 #fbfbf8 #fbfbf8 #6d6d69;box-shadow:inset 1px 1px 0 #a9a79e"></div>
<div class="a v r" style="transform:scaleX(1.0165);transform-origin:right center;right:984px;top:334.0px;line-height:14px;font-size:11.7px">Patient Ins ID:</div>
<div class="a " style="left:102px;top:332px;width:145px;height:18px;background:#f0efe6;border:1px solid;border-color:#6d6d69 #fbfbf8 #fbfbf8 #6d6d69;box-shadow:inset 1px 1px 0 #a9a79e"></div>
<div class="a v r" style="transform:scaleX(1.0398);transform-origin:right center;right:984px;top:353.0px;line-height:14px;font-size:11.7px">Payer ID:</div>
<div class="a " style="left:102px;top:352px;width:61px;height:18px;background:#f0efe6;border:1px solid;border-color:#6d6d69 #fbfbf8 #fbfbf8 #6d6d69;box-shadow:inset 1px 1px 0 #a9a79e"></div>
<div class="a " style="left:253px;top:312px;width:165px;height:18px;border:1px solid #dddcd4;box-shadow:inset 1px 1px 0 #cbc9bf"></div>
<svg class="a" style="left:261px;top:314px" width="16" height="16" viewBox="0 0 16 16"><circle cx="7.500" cy="8" r="5.700" fill="#fff" stroke="#333" stroke-width="1.100"/><circle cx="7.500" cy="8" r="3" fill="#333"/></svg>
<div class="a v" style="transform:scaleX(0.9993);transform-origin:left center;left:279.5px;top:314.0px;line-height:14px;">Primary</div>
<svg class="a" style="left:332px;top:314px" width="16" height="16" viewBox="0 0 16 16"><circle cx="8" cy="8.500" r="6" fill="#fff" stroke="#8f8f8a" stroke-width="0.7"/></svg>
<div class="a v" style="transform:scaleX(0.9946);transform-origin:left center;left:351.5px;top:314.0px;line-height:14px;color:#a09d94;text-shadow:1px 1px 0 #fff">Secondary</div>
<div class="a btn v" style="left:424px;top:311px;width:82px;height:19px;background:#e1e1e1;border-color:#adadad;line-height:17px;font-size:11.4px">Next Ins. Co</div>
<div class="a v" style="transform:scaleX(0.9757);transform-origin:left center;left:287.5px;top:353.0px;line-height:14px;">Begin:</div>
<div class="a " style="left:326px;top:352px;width:73px;height:18px;background:#f0efe6;border:1px solid;border-color:#6d6d69 #fbfbf8 #fbfbf8 #6d6d69;box-shadow:inset 1px 1px 0 #a9a79e"></div>
<div class="a v" style="transform:scaleX(0.9771);transform-origin:left center;left:403px;top:353.0px;line-height:14px;">End:</div>
<div class="a " style="left:433px;top:352px;width:75px;height:18px;background:#f0efe6;border:1px solid;border-color:#6d6d69 #fbfbf8 #fbfbf8 #6d6d69;box-shadow:inset 1px 1px 0 #a9a79e"></div>
<div class="a " style="left:14px;top:373px;width:494px;height:1px;background:#000"></div>
<div class="a btn v" style="left:511.5px;top:354.5px;width:98.5px;height:18.0px;background:#e1e1e1;border-color:#adadad;line-height:16.0px;font-size:11.6px">Insurance Card</div>
<div class="a " style="left:506.8px;top:349px;width:110.2px;height:29.8px;border:4.600px solid #e81b2c"></div>
<div class="a v" style="transform:scaleX(0.9853);transform-origin:left center;left:23px;top:377.5px;line-height:14px;font-size:11.7px">Subscriber:</div>
<div class="a " style="left:22px;top:392px;width:113px;height:17px;background:#f0efe6;border:1px solid;border-color:#6d6d69 #fbfbf8 #fbfbf8 #6d6d69;box-shadow:inset 1px 1px 0 #a9a79e"></div>
<div class="a" style="left:118px;top:394px;width:16px;height:14px;background:#e1e1e1;border:1px solid #adadad"></div>
<svg class="a" style="left:121px;top:398.8px" width="10" height="8" viewBox="0 0 10 8"><path d="M1.500,2 l3.500,3.500 l3.500,-3.500" fill="none" stroke="#555" stroke-width="0.950"/></svg>
<div class="a " style="left:142px;top:387px;width:364px;height:29px;border:1px solid #9d9a90;box-shadow:1px 1px 0 #fff, inset 1px 1px 0 #fff"></div>
<div class="a " style="left:145px;top:380px;width:153px;height:14px;background:#d3d2c8"></div>
<div class="a v" style="transform:scaleX(0.9943);transform-origin:left center;left:147.5px;top:377.0px;line-height:14px;">Relationship to Subscriber</div>
<div class="a " style="left:146px;top:394.5px;width:13px;height:13px;background:#d3d2c8;border:1px solid #333"></div>
<svg class="a" style="left:146px;top:394.5px" width="13" height="13" viewBox="0 0 13 13"><path d="M2.500,6.500 l3,3 l5,-6.500" fill="none" stroke="#222" stroke-width="1.100"/></svg>
<div class="a v" style="left:159.5px;top:392.0px;line-height:14px;text-shadow:0.4px 0 0 #000">self</div>
<div class="a " style="left:195px;top:396px;width:11px;height:11px;background:#fff"></div>
<div class="a v" style="left:207.5px;top:392.5px;line-height:14px;color:#a09d94;text-shadow:1px 1px 0 #fff">spouse</div>
<div class="a " style="left:259px;top:396px;width:11px;height:11px;background:#fff"></div>
<div class="a v" style="left:272px;top:392.5px;line-height:14px;color:#a09d94;text-shadow:1px 1px 0 #fff">child</div>
<div class="a " style="left:307px;top:396px;width:11px;height:11px;background:#fff"></div>
<div class="a v" style="left:321px;top:392.5px;line-height:14px;color:#a09d94;text-shadow:1px 1px 0 #fff">other:</div>
<div class="a " style="left:361px;top:392px;width:50px;height:17px;background:#e6e5e1;border:1px solid;border-color:#6d6d69 #fbfbf8 #fbfbf8 #6d6d69;box-shadow:inset 1px 1px 0 #a9a79e"></div>
<div class="a " style="left:14px;top:420px;width:492px;height:160px;border:1px solid #c9c6bd;box-shadow:1px 1px 0 #e9e7e0, inset 1px 1px 0 #e9e7e0"></div>
<div class="a " style="left:20px;top:413px;width:136px;height:14px;background:#d3d2c8"></div>
<div class="a v" style="transform:scaleX(0.9930);transform-origin:left center;left:23.5px;top:413.0px;line-height:14px;">Subscriber information</div>
<div class="a v r" style="transform:scaleX(0.9993);transform-origin:right center;right:980px;top:433.0px;line-height:14px;">First Name:</div>
<div class="a " style="left:110px;top:432px;width:133px;height:17px;background:#f0efe6;border:1px solid;border-color:#6d6d69 #fbfbf8 #fbfbf8 #6d6d69;box-shadow:inset 1px 1px 0 #a9a79e"></div>
<div class="a v" style="left:247.5px;top:433.0px;line-height:14px;">MI:</div>
<div class="a " style="left:269px;top:432px;width:26px;height:17px;background:#f0efe6;border:1px solid;border-color:#6d6d69 #fbfbf8 #fbfbf8 #6d6d69;box-shadow:inset 1px 1px 0 #a9a79e"></div>
<div class="a v r" style="transform:scaleX(0.9723);transform-origin:right center;right:720px;top:433.0px;line-height:14px;">Birthdate:</div>
<div class="a " style="left:365px;top:432px;width:103px;height:17px;background:#f0efe6;border:1px solid;border-color:#6d6d69 #fbfbf8 #fbfbf8 #6d6d69;box-shadow:inset 1px 1px 0 #a9a79e"></div>
<div class="a v r" style="right:980px;top:450.5px;line-height:14px;">Last Name:</div>
<div class="a " style="left:110px;top:450px;width:185px;height:17px;background:#f0efe6;border:1px solid;border-color:#6d6d69 #fbfbf8 #fbfbf8 #6d6d69;box-shadow:inset 1px 1px 0 #a9a79e"></div>
<div class="a v r" style="transform:scaleX(1.0729);transform-origin:right center;right:720px;top:450.5px;line-height:14px;">SS/ID#</div>
<div class="a " style="left:365px;top:450px;width:103px;height:17px;background:#f0efe6;border:1px solid;border-color:#6d6d69 #fbfbf8 #fbfbf8 #6d6d69;box-shadow:inset 1px 1px 0 #a9a79e"></div>
<div class="a v r" style="right:977px;top:469.5px;line-height:14px;">Gender:</div>
<div class="a " style="left:110px;top:469px;width:145px;height:17px;background:#f0efe6;border:1px solid;border-color:#6d6d69 #fbfbf8 #fbfbf8 #6d6d69;box-shadow:inset 1px 1px 0 #a9a79e"></div>
<div class="a" style="left:238px;top:471px;width:16px;height:14px;background:#e1e1e1;border:1px solid #adadad"></div>
<svg class="a" style="left:241px;top:475.8px" width="10" height="8" viewBox="0 0 10 8"><path d="M1.500,2 l3.500,3.500 l3.500,-3.500" fill="none" stroke="#555" stroke-width="0.950"/></svg>
<div class="a v r" style="right:980px;top:489.5px;line-height:14px;">Address:</div>
<div class="a " style="left:110px;top:488px;width:358px;height:17px;background:#f0efe6;border:1px solid;border-color:#6d6d69 #fbfbf8 #fbfbf8 #6d6d69;box-shadow:inset 1px 1px 0 #a9a79e"></div>
<div class="a " style="left:110px;top:506px;width:358px;height:16px;background:#f0efe6;border:1px solid;border-color:#6d6d69 #fbfbf8 #fbfbf8 #6d6d69;box-shadow:inset 1px 1px 0 #a9a79e"></div>
<div class="a v r" style="right:980px;top:525.5px;line-height:14px;">City:</div>
<div class="a " style="left:110px;top:524px;width:136px;height:16px;background:#f0efe6;border:1px solid;border-color:#6d6d69 #fbfbf8 #fbfbf8 #6d6d69;box-shadow:inset 1px 1px 0 #a9a79e"></div>
<div class="a" style="left:229px;top:526px;width:16px;height:13px;background:#e1e1e1;border:1px solid #adadad"></div>
<svg class="a" style="left:232px;top:530.3px" width="10" height="8" viewBox="0 0 10 8"><path d="M1.500,2 l3.500,3.500 l3.500,-3.500" fill="none" stroke="#555" stroke-width="0.950"/></svg>
<div class="a v" style="left:251px;top:525.5px;line-height:14px;">State:</div>
<div class="a " style="left:290px;top:524px;width:56px;height:16px;background:#f0efe6;border:1px solid;border-color:#6d6d69 #fbfbf8 #fbfbf8 #6d6d69;box-shadow:inset 1px 1px 0 #a9a79e"></div>
<div class="a" style="left:329px;top:526px;width:16px;height:13px;background:#e1e1e1;border:1px solid #adadad"></div>
<svg class="a" style="left:332px;top:530.3px" width="10" height="8" viewBox="0 0 10 8"><path d="M1.500,2 l3.500,3.500 l3.500,-3.500" fill="none" stroke="#555" stroke-width="0.950"/></svg>
<div class="a v" style="left:355.5px;top:525.5px;line-height:14px;">Zip:</div>
<div class="a " style="left:381px;top:524px;width:86px;height:16px;background:#f0efe6;border:1px solid;border-color:#6d6d69 #fbfbf8 #fbfbf8 #6d6d69;box-shadow:inset 1px 1px 0 #a9a79e"></div>
<div class="a" style="left:450px;top:526px;width:16px;height:13px;background:#e1e1e1;border:1px solid #adadad"></div>
<svg class="a" style="left:453px;top:530.3px" width="10" height="8" viewBox="0 0 10 8"><path d="M1.500,2 l3.500,3.500 l3.500,-3.500" fill="none" stroke="#555" stroke-width="0.950"/></svg>
<div class="a v r" style="right:980px;top:541.5px;line-height:14px;">Phone:</div>
<div class="a " style="left:110px;top:542px;width:137px;height:17px;background:#f0efe6;border:1px solid;border-color:#6d6d69 #fbfbf8 #fbfbf8 #6d6d69;box-shadow:inset 1px 1px 0 #a9a79e"></div>
<div class="a v r" style="right:980px;top:561.5px;line-height:14px;">Employer:</div>
<div class="a " style="left:110px;top:561px;width:137px;height:16px;background:#f0efe6;border:1px solid;border-color:#6d6d69 #fbfbf8 #fbfbf8 #6d6d69;box-shadow:inset 1px 1px 0 #a9a79e"></div>
<div class="a v" style="left:317.5px;top:561.5px;line-height:14px;">Group #:</div>
<div class="a " style="left:374px;top:560px;width:94px;height:17px;background:#f0efe6;border:1px solid;border-color:#6d6d69 #fbfbf8 #fbfbf8 #6d6d69;box-shadow:inset 1px 1px 0 #a9a79e"></div>
<div class="a " style="left:514px;top:388px;width:472px;height:185px;border:1px solid #9d9a90;box-shadow:1px 1px 0 #fff, inset 1px 1px 0 #fff"></div>
<div class="a " style="left:517px;top:381px;width:58px;height:14px;background:#d3d2c8"></div>
<div class="a v b" style="left:519.5px;top:381.5px;line-height:14px;font-size:11.4px">Benefits</div>
<div class="a v r" style="transform:scaleX(0.9961);transform-origin:right center;right:476px;top:402.0px;line-height:14px;">Changed Date:</div>
<div class="a " style="left:610px;top:396px;width:99px;height:21px;background:#f0efe6;border:1px solid;border-color:#6d6d69 #fbfbf8 #fbfbf8 #6d6d69;box-shadow:inset 1px 1px 0 #a9a79e"></div>
<div class="a v" style="transform:scaleX(0.9951);transform-origin:left center;left:718.5px;top:402.0px;line-height:14px;">Non-Duplication of Benefits Clause?</div>
<div class="a " style="left:933px;top:403px;width:13px;height:13px;background:#fff;border:1px solid #222"></div>
<div class="a " style="left:936px;top:406px;width:7px;height:7px;background:#333"></div>
<div class="a v r" style="transform:scaleX(0.9840);transform-origin:right center;right:476px;top:421.5px;line-height:14px;">Max Benefits:</div>
<div class="a " style="left:610px;top:421px;width:98px;height:16px;background:#f0efe6;border:1px solid;border-color:#6d6d69 #fbfbf8 #fbfbf8 #6d6d69;box-shadow:inset 1px 1px 0 #a9a79e"></div>
<div class="a v r" style="right:280px;top:421.5px;line-height:14px;">Benefits left:</div>
<div class="a " style="left:807px;top:421px;width:97px;height:16px;background:#f0efe6;border:1px solid;border-color:#6d6d69 #fbfbf8 #fbfbf8 #6d6d69;box-shadow:inset 1px 1px 0 #a9a79e"></div>
<div class="a btn v" style="left:919px;top:423px;width:63px;height:18px;background:#e1e1e1;border-color:#adadad;line-height:16px;font-size:11.4px">RTB</div>
<div class="a " style="left:521px;top:452px;width:454px;height:77px;border:1px solid #dad8d0;box-shadow:1px 1px 0 #e4e2db, inset 1px 1px 0 #e4e2db"></div>
<div class="a " style="left:531px;top:445px;width:108px;height:14px;background:#d3d2c8"></div>
<div class="a v b" style="left:535.5px;top:445.0px;line-height:14px;font-size:11.4px">Deductible Left</div>
<div class="a v r" style="transform:scaleX(1.0237);transform-origin:right center;right:466.5px;top:469.0px;line-height:14px;">Preventive(A):</div>
<div class="a " style="left:621px;top:468px;width:102px;height:17px;background:#f0efe6;border:1px solid;border-color:#6d6d69 #fbfbf8 #fbfbf8 #6d6d69;box-shadow:inset 1px 1px 0 #a9a79e"></div>
<div class="a v r" style="transform:scaleX(1.0241);transform-origin:right center;right:255.5px;top:469.0px;line-height:14px;">Standard(B):</div>
<div class="a " style="left:833px;top:468px;width:98px;height:17px;background:#f0efe6;border:1px solid;border-color:#6d6d69 #fbfbf8 #fbfbf8 #6d6d69;box-shadow:inset 1px 1px 0 #a9a79e"></div>
<div class="a v r" style="transform:scaleX(1.0522);transform-origin:right center;right:466.5px;top:489.5px;line-height:14px;">Other(C):</div>
<div class="a " style="left:621px;top:488px;width:102px;height:17px;background:#f0efe6;border:1px solid;border-color:#6d6d69 #fbfbf8 #fbfbf8 #6d6d69;box-shadow:inset 1px 1px 0 #a9a79e"></div>
<div class="a v r" style="transform:scaleX(1.0239);transform-origin:right center;right:467.5px;top:553.0px;line-height:14px;">Spoken to:</div>
<div class="a " style="left:625px;top:552px;width:194px;height:18px;background:#f0efe6;border:1px solid;border-color:#6d6d69 #fbfbf8 #fbfbf8 #6d6d69;box-shadow:inset 1px 1px 0 #a9a79e"></div>
<div class="a v" style="transform:scaleX(1.0000);transform-origin:left center;left:15.2px;top:581.0px;line-height:14px;">Summary of all claims submitted for this patient for this insurance company:</div>
<div class="a " style="left:646px;top:580px;width:13px;height:13px;background:#fff;border:1px solid #333"></div>
<svg class="a" style="left:646px;top:580px" width="13" height="13" viewBox="0 0 13 13"><path d="M2.500,6.500 l3,3 l5,-6.500" fill="none" stroke="#222" stroke-width="1.100"/></svg>
<div class="a v" style="transform:scaleX(1.0061);transform-origin:left center;left:660.5px;top:580.0px;line-height:14px;">Hide Voided Transactions</div>
<div class="a v" style="transform:scaleX(0.9769);transform-origin:left center;left:815.5px;top:580.5px;line-height:14px;">Notes:</div>
<div class="a " style="left:963px;top:579px;width:18px;height:15px;background:#e8e48a;border:2px solid #1c6fd1;box-shadow:inset 0 0 0 1px #e8e48a"></div>
<div class="a " style="left:965px;top:581px;width:14px;height:11px;border:1px dotted #222"></div>
<div class="a " style="left:13px;top:597px;width:797px;height:109px;background:#f0efe6;border:1px solid;border-color:#6d6d69 #fbfbf8 #fbfbf8 #6d6d69;box-shadow:inset 1px 1px 0 #a9a79e"></div>
<div class="a " style="left:15px;top:599px;width:794px;height:30px;background:#99aad4"></div>
<div class="a " style="left:15px;top:629px;width:794px;height:1px;background:#000"></div>
<div class="a v" style="transform:scaleX(1.0175);transform-origin:left center;left:28px;top:598.0px;line-height:14px;font-size:11.3px;line-height:14px">Date Sent</div>
<div class="a v" style="left:111.5px;top:598.0px;line-height:14px;font-size:11.3px;line-height:14px">Date Rec&#39;d</div>
<div class="a v" style="transform:scaleX(0.9954);transform-origin:left center;left:206.5px;top:598.0px;line-height:14px;font-size:11.3px;line-height:14px">Amount</div>
<div class="a v" style="transform:scaleX(1.0496);transform-origin:left center;left:274px;top:598.0px;line-height:14px;font-size:11.3px;line-height:14px">Claim Type</div>
<div class="a v" style="transform:scaleX(0.9788);transform-origin:left center;left:351.5px;top:598.0px;line-height:14px;font-size:11.3px;line-height:14px">Claim #</div>
<div class="a v" style="left:454.5px;top:598.0px;line-height:14px;font-size:11.3px;line-height:14px">Type</div>
<div class="a v c" style="left:555.5px;width:110px;top:597px;font-size:11.3px;line-height:14px;line-height:13.5px;white-space:normal">Assigned / Non-<br>assigned</div>
<div class="a v" style="left:672.5px;top:597.5px;line-height:14px;font-size:11.3px;line-height:14px">View</div>
<div class="a v" style="left:703.5px;top:597.5px;line-height:14px;font-size:11.3px;line-height:14px">Close</div>
<div class="a v" style="left:703.5px;top:611.0px;line-height:14px;font-size:11.3px;line-height:14px">No Pmt</div>
<div class="a v" style="left:747px;top:597.5px;line-height:14px;font-size:11.3px;line-height:14px">Reopen</div>
<div class="a v" style="left:747px;top:611.0px;line-height:14px;font-size:11.3px;line-height:14px">Claim</div>
<div class="a " style="left:813px;top:597px;width:174px;height:109px;background:#f0efe6;border:1px solid;border-color:#6d6d69 #fbfbf8 #fbfbf8 #6d6d69;box-shadow:inset 1px 1px 0 #a9a79e"></div>
<div class="a " style="left:8.5px;top:756px;font-size:11.3px;line-height:14px;color:#444">Record:</div>
<div class="a " style="left:82px;top:755px;width:50px;height:16px;background:#fff;border:1px solid #ababab"></div>
<div class="a " style="left:85px;top:756px;font-size:11.3px;line-height:14px;color:#444;color:#000">1 of 1</div>
<div class="a " style="left:275px;top:755px;width:70px;height:16px;background:#fff;border:1px solid #ababab"></div>
<div class="a " style="left:278px;top:756px;font-size:11.3px;line-height:14px;color:#444;color:#000">Search</div>
<div class="a " style="left:216.5px;top:756px;font-size:11.3px;line-height:14px;color:#444;color:#a0a0a0">No Filter</div>
<div class="a " style="left:189px;top:754px;width:1px;height:17px;background:#c8c8c8"></div>
<div class="a " style="left:269px;top:754px;width:1px;height:17px;background:#c8c8c8"></div>
<svg class="a" style="left:50px;top:754px" width="170" height="18" viewBox="50 754 170 18"><rect x="53.500" y="759" width="1.300" height="8" fill="#444"/><path d="M60,759 v8 l-4.500,-4 z" fill="#444"/><path d="M77,759 v8 l-4.500,-4 z" fill="#b4b4b4"/><path d="M141,759 v8 l4.500,-4 z" fill="#b4b4b4"/><path d="M157,759 v8 l4.500,-4 z" fill="#444"/><rect x="162" y="759" width="1.300" height="8" fill="#444"/><path d="M171,759 v8 l4.500,-4 z" fill="#b4b4b4"/><path d="M180,758.500 l1,2.500 l2.500,-1 l-1,2.500 l2.500,1 l-2.500,1 l1,2.500 l-2.500,-1 l-1,2.500 l-1,-2.500 l-2.500,1 l1,-2.500 l-2.500,-1 l2.500,-1 l-1,-2.500 l2.500,1 z" fill="#f0d890"/><path d="M198,757 h11 l-4.300,5 v5.500 l-2.400,-1.500 v-4 z" fill="#b0b0b0"/><path d="M205.500,764 l6,5.500 M211.500,764 l-6,5.500" stroke="#a0a0a0" stroke-width="1.300"/></svg>
<div class="a " style="transform:scaleX(0.9344);transform-origin:left center;left:8.5px;top:799px;font-size:11.6px;line-height:14px;color:#fff">User: Calvin</div>
<div class="a " style="transform:scaleX(0.7492);transform-origin:left center;left:80.5px;top:799px;font-size:11.6px;line-height:14px;color:#fff">BP:</div>
<div class="a " style="transform:scaleX(0.9059);transform-origin:left center;left:113.5px;top:799px;font-size:11.6px;line-height:14px;color:#fff">Pulse:</div>
<div class="a " style="transform:scaleX(0.9247);transform-origin:left center;left:161.5px;top:799px;font-size:11.6px;line-height:14px;color:#fff">Temp:</div>
<div class="a " style="transform:scaleX(0.9829);transform-origin:left center;left:209px;top:799px;font-size:11.6px;line-height:14px;color:#fff">Alert:</div>
<div class="a " style="transform:scaleX(0.9260);transform-origin:left center;left:260.5px;top:799px;font-size:11.6px;line-height:14px;color:#fff">Ref Dr:</div>
<div class="a " style="transform:scaleX(0.7224);transform-origin:left center;left:310px;top:799px;font-size:11.6px;line-height:14px;color:#fff">(P):</div>
<div class="a " style="transform:scaleX(0.9361);transform-origin:left center;left:343px;top:799px;font-size:11.6px;line-height:14px;color:#fff">Gen Dr:</div>
<div class="a " style="transform:scaleX(0.7492);transform-origin:left center;left:396.5px;top:799px;font-size:11.6px;line-height:14px;color:#fff">(P):</div>
<div class="a " style="transform:scaleX(0.8986);transform-origin:left center;left:808px;top:799px;font-size:11.6px;line-height:14px;color:#fff">NUM LOCK</div>
<div class="a " style="transform:scaleX(0.8647);transform-origin:left center;left:883px;top:799px;font-size:11.6px;line-height:14px;color:#fff">POWERED BY MICROSOFT ACCESS</div>
</body></html>
